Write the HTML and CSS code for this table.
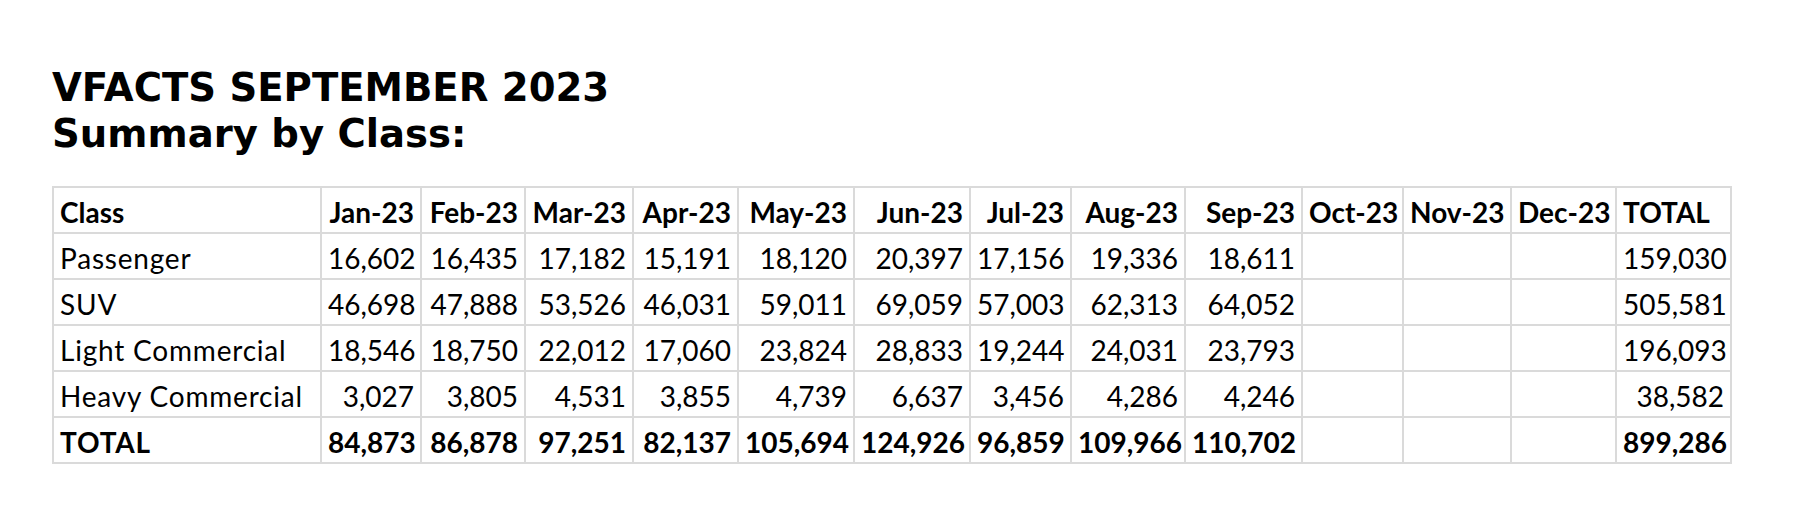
FILE: index.html
```html
<!DOCTYPE html>
<html lang="en">
<head>
<meta charset="utf-8">
<title>VFACTS September 2023</title>
<link rel="stylesheet" href="styles.css">
</head>
<body>
<main class="page">
  <h1 class="title">VFACTS SEPTEMBER 2023<br>Summary by Class:</h1>
  <table class="summary">
    <colgroup>
      <col class="c-class">
      <col class="c-jan"><col class="c-feb"><col class="c-mar"><col class="c-apr">
      <col class="c-may"><col class="c-jun"><col class="c-jul"><col class="c-aug">
      <col class="c-sep"><col class="c-oct"><col class="c-nov"><col class="c-dec">
      <col class="c-total">
    </colgroup>
    <thead>
      <tr class="head">
        <th class="label">Class</th>
        <th>Jan-23</th><th>Feb-23</th><th>Mar-23</th><th>Apr-23</th>
        <th>May-23</th><th>Jun-23</th><th>Jul-23</th><th>Aug-23</th>
        <th>Sep-23</th><th>Oct-23</th><th>Nov-23</th><th>Dec-23</th>
        <th class="label">TOTAL</th>
      </tr>
    </thead>
    <tbody>
      <tr>
        <td class="label">Passenger</td>
        <td>16,602</td><td>16,435</td><td>17,182</td><td>15,191</td><td>18,120</td><td>20,397</td><td>17,156</td><td>19,336</td><td>18,611</td><td></td><td></td><td></td><td>159,030</td>
      </tr>
      <tr>
        <td class="label">SUV</td>
        <td>46,698</td><td>47,888</td><td>53,526</td><td>46,031</td><td>59,011</td><td>69,059</td><td>57,003</td><td>62,313</td><td>64,052</td><td></td><td></td><td></td><td>505,581</td>
      </tr>
      <tr>
        <td class="label">Light Commercial</td>
        <td>18,546</td><td>18,750</td><td>22,012</td><td>17,060</td><td>23,824</td><td>28,833</td><td>19,244</td><td>24,031</td><td>23,793</td><td></td><td></td><td></td><td>196,093</td>
      </tr>
      <tr>
        <td class="label">Heavy Commercial</td>
        <td>3,027</td><td>3,805</td><td>4,531</td><td>3,855</td><td>4,739</td><td>6,637</td><td>3,456</td><td>4,286</td><td>4,246</td><td></td><td></td><td></td><td>38,582</td>
      </tr>
      <tr class="total">
        <td class="label">TOTAL</td>
        <td>84,873</td><td>86,878</td><td>97,251</td><td>82,137</td><td>105,694</td><td>124,926</td><td>96,859</td><td>109,966</td><td>110,702</td><td></td><td></td><td></td><td>899,286</td>
      </tr>
    </tbody>
  </table>
</main>
</body>
</html>
```
FILE: styles.css
```css
html, body {
  margin: 0;
  padding: 0;
  background: #ffffff;
}

.page {
  padding: 65px 0 0 52px;
  color: #000000;
}

.title {
  margin: 0 0 29px 0;
  font-family: "DejaVu Sans", Verdana, sans-serif;
  font-weight: bold;
  font-size: 38.6px;
  line-height: 46px;
}

.summary {
  border-collapse: collapse;
  table-layout: fixed;
  width: 1678px;
  font-family: Lato, "Liberation Sans", sans-serif;
  font-size: 28px;
}

.c-class { width: 268px; }
.c-jan { width: 100px; }
.c-feb { width: 104px; }
.c-mar { width: 108px; }
.c-apr { width: 105px; }
.c-may { width: 116px; }
.c-jun { width: 116px; }
.c-jul { width: 101px; }
.c-aug { width: 114px; }
.c-sep { width: 117px; }
.c-oct { width: 101px; }
.c-nov { width: 108px; }
.c-dec { width: 105px; }
.c-total { width: 115px; }

.summary th,
.summary td {
  border: 2px solid #dadada;
  height: 46px;
  box-sizing: border-box;
  padding: 0 6px 6px 6px;
  line-height: 28px;
  vertical-align: bottom;
  text-align: right;
  white-space: nowrap;
  font-weight: normal;
}

.summary .head th,
.summary .total td {
  font-weight: bold;
}

.summary .label {
  text-align: left;
}

.summary tbody .label {
  letter-spacing: 0.8px;
}
```
